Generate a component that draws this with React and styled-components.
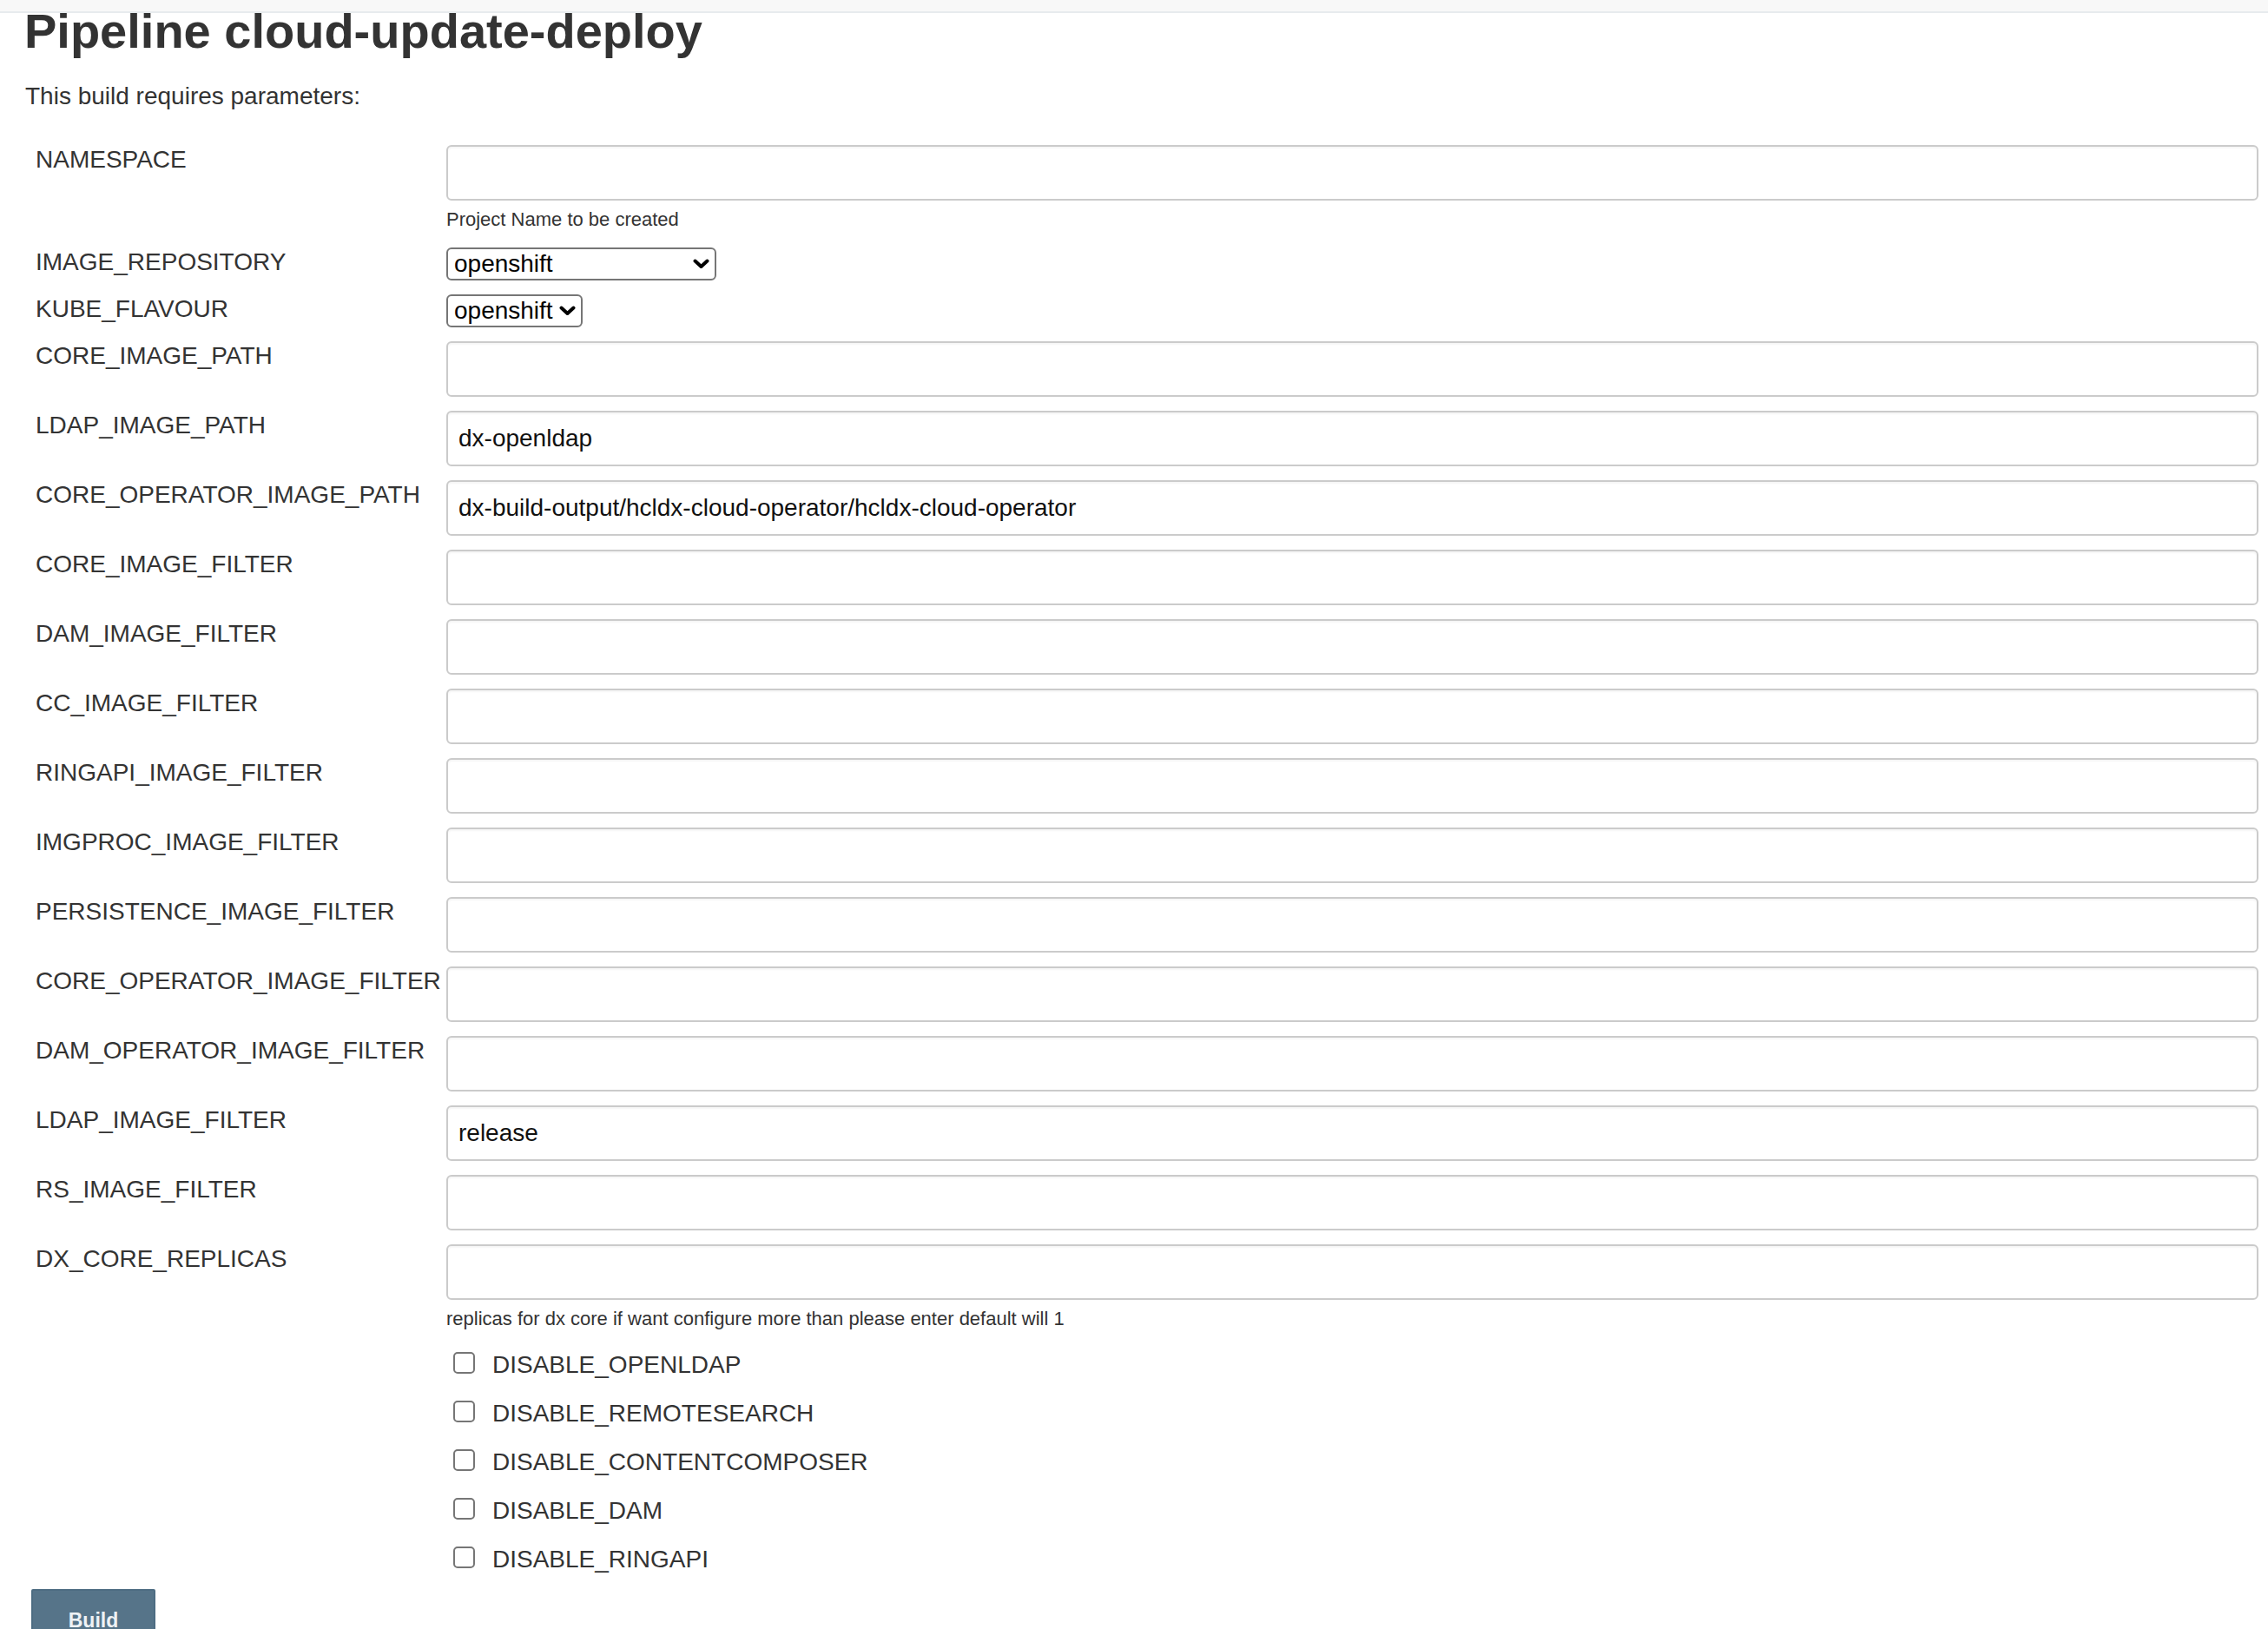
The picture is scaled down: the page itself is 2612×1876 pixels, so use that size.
import React from 'react'
import styled, { createGlobalStyle } from 'styled-components'

const GlobalStyle = createGlobalStyle`
  html, body {
    margin: 0;
    padding: 0;
    background: #fff;
  }
  body {
    font-family: "Liberation Sans", Arial, Helvetica, sans-serif;
    color: #333;
  }
`

const params = [
  { name: 'NAMESPACE', type: 'text', value: '', description: 'Project Name to be created' },
  { name: 'IMAGE_REPOSITORY', type: 'select', value: 'openshift', width: 311 },
  { name: 'KUBE_FLAVOUR', type: 'select', value: 'openshift', width: 157 },
  { name: 'CORE_IMAGE_PATH', type: 'text', value: '' },
  { name: 'LDAP_IMAGE_PATH', type: 'text', value: 'dx-openldap' },
  { name: 'CORE_OPERATOR_IMAGE_PATH', type: 'text', value: 'dx-build-output/hcldx-cloud-operator/hcldx-cloud-operator' },
  { name: 'CORE_IMAGE_FILTER', type: 'text', value: '' },
  { name: 'DAM_IMAGE_FILTER', type: 'text', value: '' },
  { name: 'CC_IMAGE_FILTER', type: 'text', value: '' },
  { name: 'RINGAPI_IMAGE_FILTER', type: 'text', value: '' },
  { name: 'IMGPROC_IMAGE_FILTER', type: 'text', value: '' },
  { name: 'PERSISTENCE_IMAGE_FILTER', type: 'text', value: '' },
  { name: 'CORE_OPERATOR_IMAGE_FILTER', type: 'text', value: '' },
  { name: 'DAM_OPERATOR_IMAGE_FILTER', type: 'text', value: '' },
  { name: 'LDAP_IMAGE_FILTER', type: 'text', value: 'release' },
  { name: 'RS_IMAGE_FILTER', type: 'text', value: '' },
  {
    name: 'DX_CORE_REPLICAS',
    type: 'text',
    value: '',
    description: 'replicas for dx core if want configure more than please enter default will 1',
  },
  { name: 'DISABLE_OPENLDAP', type: 'bool' },
  { name: 'DISABLE_REMOTESEARCH', type: 'bool' },
  { name: 'DISABLE_CONTENTCOMPOSER', type: 'bool' },
  { name: 'DISABLE_DAM', type: 'bool' },
  { name: 'DISABLE_RINGAPI', type: 'bool' },
]

const Chevron = () => (
  <svg width="19" height="12" viewBox="0 0 19 12">
    <path d="M2.5 2.5 L9.5 9 L16.5 2.5" fill="none" stroke="#000" strokeWidth="4" strokeLinecap="round" strokeLinejoin="round" />
  </svg>
)

const Field = ({ param }) => {
  if (param.type === 'select') {
    return (
      <SelectWrap $width={param.width}>
        <Select defaultValue={param.value}>
          <option value={param.value}>{param.value}</option>
        </Select>
        <ChevronBox>
          <Chevron />
        </ChevronBox>
      </SelectWrap>
    )
  }
  return <TextInput type="text" defaultValue={param.value} />
}

const App = () => {
  return (
    <>
      <GlobalStyle />
      <TopBar />
      <Main>
        <Title>Pipeline cloud-update-deploy</Title>
        <Intro>This build requires parameters:</Intro>
        <Form>
          {params.map((p) =>
            p.type === 'bool' ? (
              <CheckRow key={p.name}>
                <span />
                <CheckCell>
                  <Checkbox type="checkbox" />
                  <CheckLabel>{p.name}</CheckLabel>
                </CheckCell>
              </CheckRow>
            ) : (
              <React.Fragment key={p.name}>
                <Row>
                  <Label>{p.name}</Label>
                  <div>
                    <Field param={p} />
                  </div>
                </Row>
                {p.description && (
                  <DescRow>
                    <span />
                    <Description>{p.description}</Description>
                  </DescRow>
                )}
              </React.Fragment>
            )
          )}
        </Form>
        <BuildButton>Build</BuildButton>
      </Main>
    </>
  )
}

export default App

const TopBar = styled.div`
  position: relative;
  z-index: 1;
  height: 13px;
  background: #f8f8f8;
  border-bottom: 2px solid #e7ebee;
`

const Main = styled.div`
  padding: 0 11px 0 28px;
`

const Title = styled.h1`
  margin: -7px 0 0;
  font-size: 56px;
  line-height: 56px;
  font-weight: 700;
  color: #333;
`

const Intro = styled.p`
  margin: 31px 0 0 1px;
  font-size: 28px;
  line-height: 32px;
  color: #333;
`

const Form = styled.div`
  margin-top: 32px;
  display: flex;
  flex-direction: column;
`

const Row = styled.div`
  display: grid;
  grid-template-columns: 486px 1fr;
  padding: 8px 0;
`

const Label = styled.div`
  padding: 1px 0 0 13px;
  font-size: 28px;
  line-height: 32px;
  white-space: nowrap;
  color: #333;
`

const TextInput = styled.input`
  display: block;
  box-sizing: border-box;
  width: 100%;
  height: 64px;
  margin: 0;
  padding: 0 12px;
  border: 2px solid #cbcbcb;
  border-radius: 6px;
  box-shadow: inset 0 2px 2px rgba(0, 0, 0, 0.04);
  background: #fff;
  font-family: "Liberation Sans", Arial, Helvetica, sans-serif;
  font-size: 28px;
  color: #111;
  outline: none;
`

const SelectWrap = styled.div`
  position: relative;
  width: ${(p) => p.$width}px;
  height: 38px;
`

const Select = styled.select`
  appearance: none;
  -webkit-appearance: none;
  box-sizing: border-box;
  width: 100%;
  height: 38px;
  margin: 0;
  padding: 0 30px 0 7px;
  border: 2px solid #767676;
  border-radius: 6px;
  background: #fff;
  font-family: "Liberation Sans", Arial, Helvetica, sans-serif;
  font-size: 28px;
  line-height: 34px;
  color: #000;
  outline: none;
`

const ChevronBox = styled.span`
  position: absolute;
  right: 8px;
  top: 13px;
  width: 19px;
  height: 12px;
  pointer-events: none;
  display: flex;
`

const DescRow = styled.div`
  display: grid;
  grid-template-columns: 486px 1fr;
  padding: 1px 0 11px;
`

const Description = styled.div`
  font-size: 22px;
  line-height: 26px;
  color: #333;
`

const CheckRow = styled.div`
  display: grid;
  grid-template-columns: 486px 1fr;
  box-sizing: border-box;
  height: 56px;
  padding: 8px 0;
`

const CheckCell = styled.label`
  display: flex;
  align-items: flex-start;
`

const Checkbox = styled.input`
  appearance: none;
  -webkit-appearance: none;
  box-sizing: border-box;
  width: 25px;
  height: 25px;
  margin: 6px 0 0 8px;
  border: 2px solid #767676;
  border-radius: 5px;
  background: #fff;
`

const CheckLabel = styled.span`
  margin-left: 20px;
  padding-top: 5px;
  font-size: 28px;
  line-height: 31px;
  color: #333;
`

const BuildButton = styled.button`
  display: block;
  box-sizing: border-box;
  width: 143px;
  height: 62px;
  margin: 7px 0 0 8px;
  padding: 10px 0 0;
  border: 2px solid #4d6c82;
  border-radius: 2px;
  background: #567489;
  color: #eef2f5;
  font-family: "Liberation Sans", Arial, Helvetica, sans-serif;
  font-size: 23px;
  line-height: 28px;
  font-weight: 700;
  text-align: center;
  vertical-align: top;
  cursor: pointer;
`
